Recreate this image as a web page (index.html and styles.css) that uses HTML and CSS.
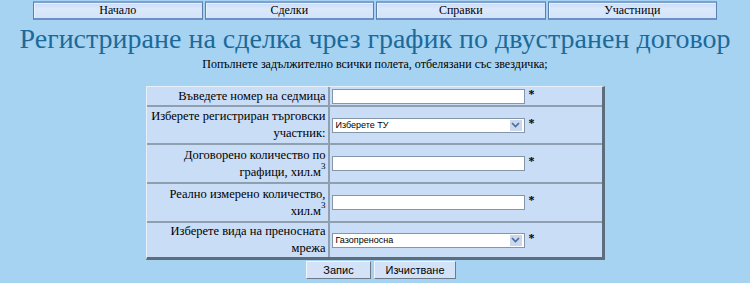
FILE: index.html
```html
<!DOCTYPE html>
<html>
<head>
<meta charset="utf-8">
<link rel="stylesheet" href="styles.css">
</head>
<body>
<nav class="nav">
  <a class="nav-item">Начало</a>
  <a class="nav-item">Сделки</a>
  <a class="nav-item">Справки</a>
  <a class="nav-item">Участници</a>
</nav>
<h1 class="title">Регистриране на сделка чрез график по двустранен договор</h1>
<p class="hint">Попълнете задължително всички полета, отбелязани със звездичка;</p>
<div class="form-wrap">
<table class="form">
  <tr class="r1">
    <td class="lbl">Въведете номер на седмица</td>
    <td class="fld"><span class="input"></span><span class="req">*</span></td>
  </tr>
  <tr class="r2">
    <td class="lbl">Изберете регистриран търговски участник:</td>
    <td class="fld"><span class="input select">Изберете ТУ<span class="arrow"><svg width="9" height="6" viewBox="0 0 9 6"><path d="M1 1 L4.5 4.5 L8 1" fill="none" stroke="#4a6a9a" stroke-width="1.6"/></svg></span></span><span class="req">*</span></td>
  </tr>
  <tr class="r3">
    <td class="lbl">Договорено количество по графици, хил.м<sup>3</sup></td>
    <td class="fld"><span class="input"></span><span class="req">*</span></td>
  </tr>
  <tr class="r3">
    <td class="lbl">Реално измерено количество, хил.м<sup>3</sup></td>
    <td class="fld"><span class="input"></span><span class="req">*</span></td>
  </tr>
  <tr class="r5">
    <td class="lbl">Изберете вида на преносната мрежа</td>
    <td class="fld"><span class="input select">Газопреносна<span class="arrow"><svg width="9" height="6" viewBox="0 0 9 6"><path d="M1 1 L4.5 4.5 L8 1" fill="none" stroke="#4a6a9a" stroke-width="1.6"/></svg></span></span><span class="req">*</span></td>
  </tr>
</table>
</div>
<div class="buttons">
  <button class="btn btn-save">Запис</button>
  <button class="btn btn-clear">Изчистване</button>
</div>
</body>
</html>
```
FILE: styles.css
```css
html, body {
  margin: 0;
  padding: 0;
  background: #a7d3f3;
  font-family: "Liberation Serif", "Times New Roman", serif;
  color: #000;
  overflow: hidden;
}
.nav {
  display: flex;
  gap: 2px;
  width: 684px;
  margin: 1px auto 0;
}
.nav-item {
  flex: 1;
  height: 15px;
  line-height: 15px;
  font-size: 12px;
  text-align: center;
  background: linear-gradient(#c8dcf8, #dce8fb 40%, #d2e3fa);
  border: 1px solid #5b7fb0;
  border-top: 2px solid #7f9fcf;
  border-bottom: 2px solid #6d8fc4;
  box-shadow: 1px 1px 0 #e8f0fb inset;
}
.title {
  margin: 3px 0 0;
  text-align: center;
  font-weight: normal;
  font-size: 28px;
  line-height: 32px;
  color: #1c6a99;
}
.hint {
  margin: 2px 0 0;
  text-align: center;
  font-size: 12px;
  line-height: 14px;
}
.form-wrap {
  display: flex;
  justify-content: center;
  margin-top: 15px;
}
.form {
  width: 459px;
  border-collapse: separate;
  border-spacing: 0;
  background: #c9ddf6;
  border-top: 1px solid #e6f0fb;
  border-left: 1px solid #e6f0fb;
  border-right: 3px solid #5d6d7c;
  border-bottom: 3px solid #5d6d7c;
}
.form td {
  border-bottom: 2px solid #8e9fb0;
  padding: 0;
}
.form tr:last-child td { border-bottom: 0; }
.form .lbl {
  width: 175px;
  text-align: right;
  font-size: 12.5px;
  line-height: 17px;
  padding: 0 2px 0 4px;
  border-right: 2px solid #8e9fb0;
}
.r1 td { height: 18px; }
.r2 td { height: 36px; }
.r3 td { height: 37px; }
.r5 td { height: 31px; }
sup {
  font-size: 9px;
  line-height: 0;
  vertical-align: 7px;
}
.form .fld {
  padding-left: 2px;
  white-space: nowrap;
  font-size: 12px;
  line-height: 15px;
}
.input {
  display: inline-flex;
  align-items: center;
  box-sizing: border-box;
  width: 193px;
  height: 15px;
  background: #fff;
  border: 1px solid #8596a8;
  vertical-align: middle;
  font-family: "Liberation Sans", Arial, sans-serif;
  font-size: 9px;
  padding-left: 3px;
  position: relative;
}
.arrow {
  position: absolute;
  right: 2px;
  top: 1px;
  width: 12px;
  height: 11px;
  background: #c9d8ee;
  display: flex;
  align-items: center;
  justify-content: center;
}
.req {
  display: inline-block;
  vertical-align: middle;
  margin-left: 4px;
  font-size: 12px;
  font-weight: bold;
  position: relative;
  top: -2px;
}
.buttons {
  display: flex;
  justify-content: center;
  gap: 3px;
  margin-top: 1px;
  padding-left: 12px;
}
.btn {
  height: 18px;
  padding: 0;
  font-family: "Liberation Sans", Arial, sans-serif;
  font-size: 11px;
  background: #d3e2f7;
  border: 1px solid;
  border-color: #f2f6fc #6b7b8c #6b7b8c #f2f6fc;
  color: #000;
}
.btn-save { width: 65px; }
.btn-clear { width: 82px; }
```
